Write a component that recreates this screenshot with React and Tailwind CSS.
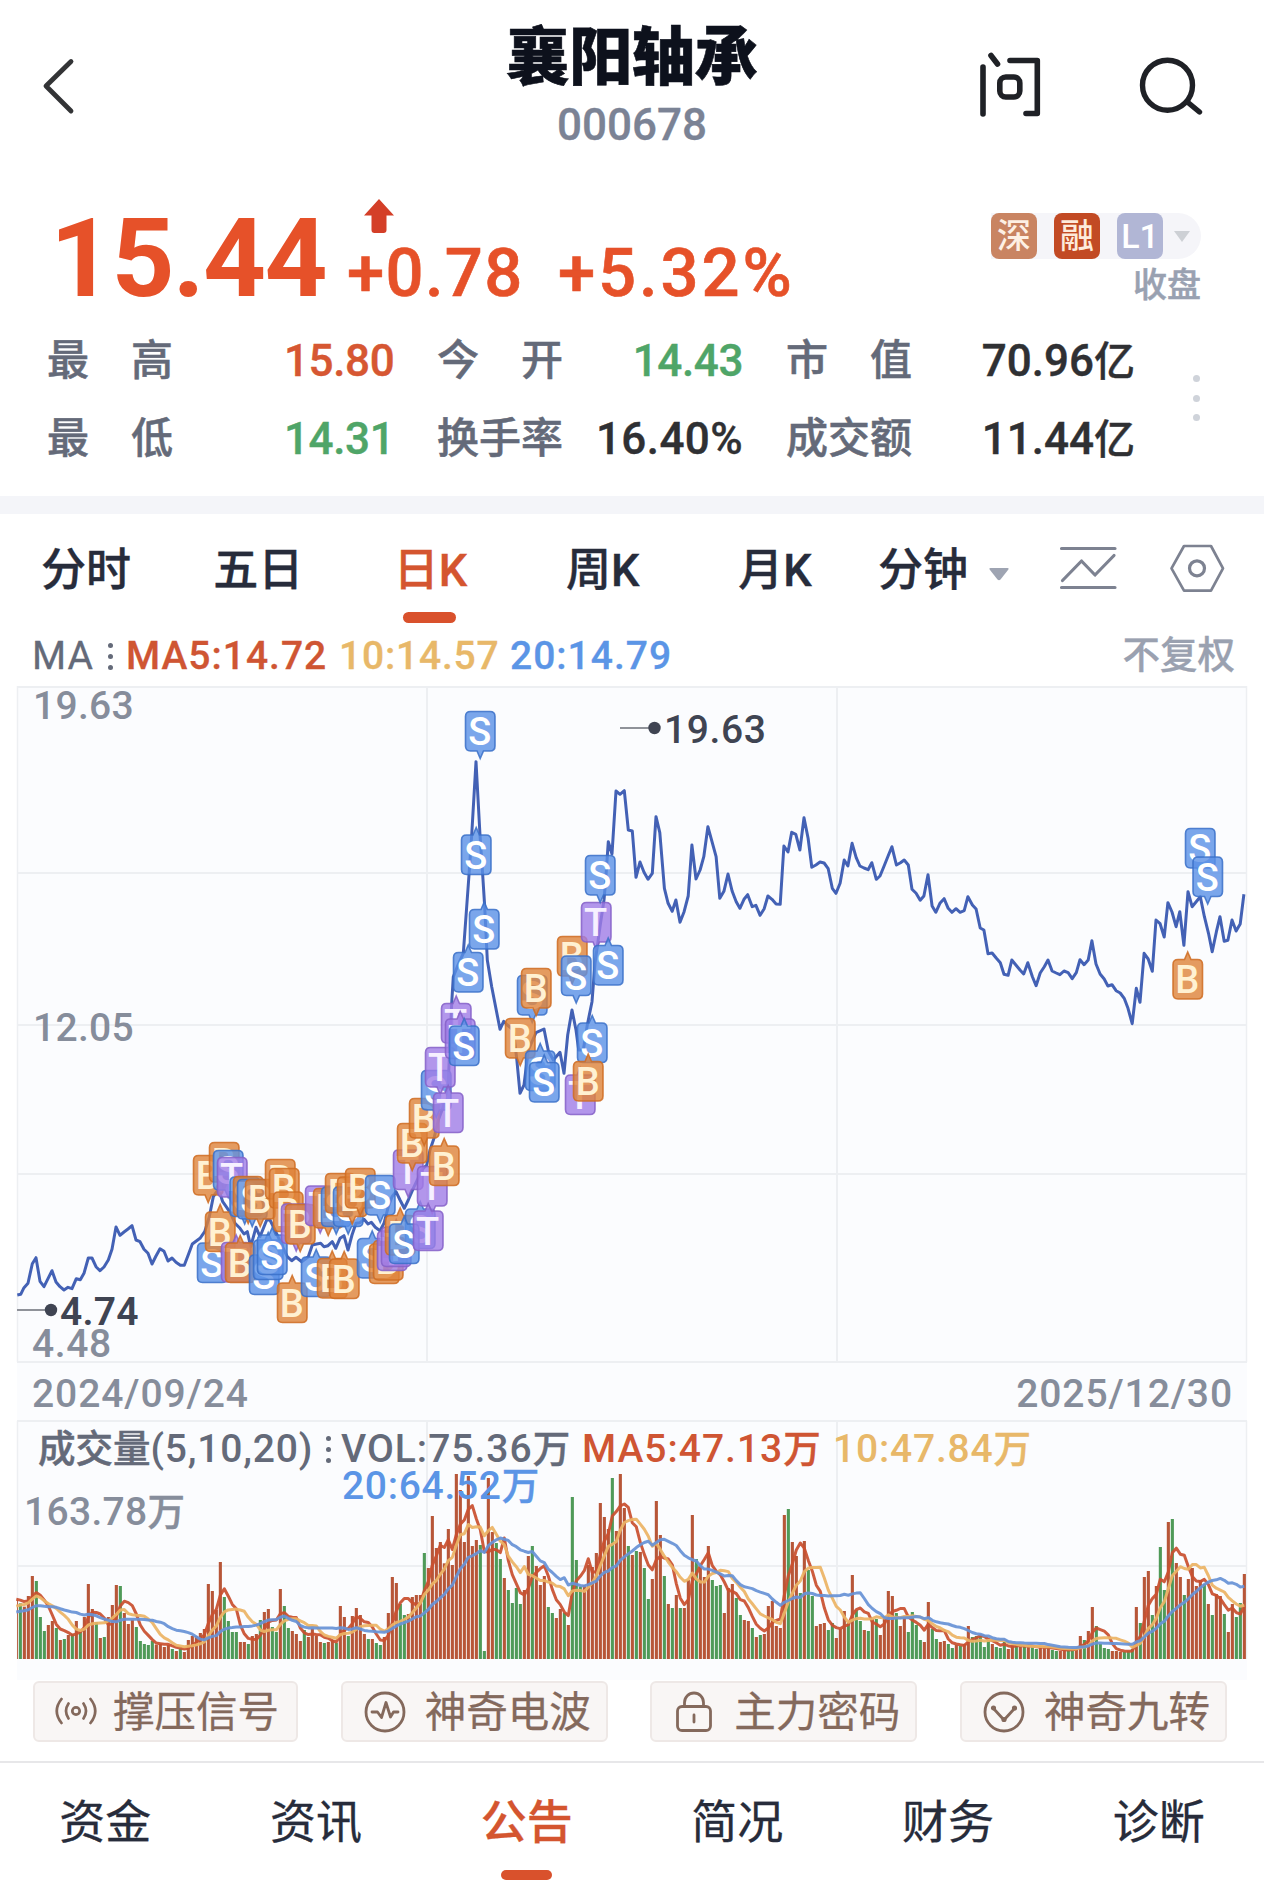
import React from "react";

const RED = "#b75638";
const GREEN = "#4f9a58";

/* ---------- price line, digitised in blocks with their own origin and scale ---------- */
const PRICE_BLOCKS = [
  {
    ox: 0, oy: 1120, sx: 3, sy: 3,
    pts: "52,525 62,523 72,503 84,490 97,431 108,413 120,484 132,500 144,476 156,452 168,486 180,500 192,510 204,502 216,506 229,476 241,479 252,460 265,414 276,414 288,440 300,452 312,441 325,420 336,388 348,321 360,346 372,336 384,327 396,317 408,360 420,365 432,388 444,400 456,432 468,408 480,386 492,394 504,423 516,414 528,427 541,436 553,436 565,404 577,372 589,363 600,355 614,335 628,290 640,230 650,215 660,220 668,245 680,262 692,280 705,310 720,325 732,342 742,335 752,380 768,322 780,350 800,300 810,300 825,330 850,385 862,410 875,422 888,412 905,425",
  },
  {
    ox: 300, oy: 1080, sx: 3, sy: 3,
    pts: "25,530 37,495 50,492 62,490 72,500 84,497 97,485 107,505 120,475 132,467 144,510 156,465 168,430 180,428 192,418 204,432 214,427 226,442 240,452 252,430 265,380 276,350 288,335 300,360 313,385 325,360 340,325 352,300 365,270 380,255 390,210 402,175 415,120 430,80 445,10",
  },
  {
    ox: 400, oy: 680, sx: 3, sy: 3,
    pts: "150,1080 152,1040 155,970 160,890 172,860 190,820 207,585 215,465 228,245 240,465 248,585 254,680 258,760 262,840 275,920 300,1048 311,1024 322,1035 340,1050 350,1135 360,1240 372,1215 385,1110 408,1058 432,1047 445,1112 460,1140 480,1117 492,1180 503,1065 516,990 528,1050 536,1110 550,1110 562,1035 576,965 585,850 600,740 612,660 617,600 625,485 636,522 648,333 660,343 673,332 685,450 697,453 708,592 720,546 732,577 744,598 757,580 768,410",
  },
  {
    ox: 620, oy: 760, sx: 2.4348, sy: 3,
    pts: "97,218 108,385 117,430 127,454 136,420 146,487 156,455 166,408 175,255 185,357 195,330 204,290 214,200 224,245 234,290 243,415 253,394 263,342 273,393 283,425 292,445 302,418 311,404 322,440 331,436 341,466 351,446 360,408 370,418 380,432 390,433 399,258 409,276 418,217 428,223 438,270 448,173 458,235 467,322 477,315 487,306 497,309 507,326 517,385 526,400 536,370 546,300 555,318 565,250 575,293 584,318 594,324 604,329 613,308 624,358 633,348 643,318 653,287 662,260 673,315 683,308 692,300 702,315 711,388 721,400 731,421 740,408 750,344 760,438 769,457 779,430 789,416 799,445 808,457 818,446 828,457 838,452 847,410 858,435 867,447 877,504 886,510 896,581 906,579 916,594 926,608 935,643 945,646 954,600 964,615 974,630 983,642 993,608 1004,650 1013,677 1023,639 1033,620 1042,600 1052,633 1062,639 1071,644 1081,633 1091,638 1101,656 1111,638 1120,599 1130,614 1140,600 1149,542 1159,612 1169,642 1179,657 1188,678 1198,674 1208,692 1218,699 1228,716 1237,745 1247,791 1257,685 1266,727 1276,580 1286,597 1296,634 1305,480 1315,491 1325,531 1334,428 1344,456 1354,500 1363,455 1373,556 1383,395 1393,440 1403,425 1413,410 1423,470 1433,520 1442,575 1452,515 1461,470 1471,544 1480,541 1490,480 1500,513 1510,492 1519,403",
  },
];

const pricePoints = PRICE_BLOCKS.flatMap(({ ox, oy, sx, sy, pts }) =>
  pts.split(" ").map((p) => {
    const [x, y] = p.split(",").map(Number);
    return `${(ox + x / sx).toFixed(1)},${(oy + y / sy).toFixed(1)}`;
  })
).join(" ");

/* ---------- trade markers: letter, left, top, pointer (d = down, u = up) ---------- */
const MARKERS = [
  ["B", 193.5, 1155.5, "d"], ["B", 209.5, 1142.5, "d"], ["S", 213.5, 1150.5, "d"], ["T", 217.5, 1157.5, "d"],
  ["S", 197.5, 1243, "u"], ["B", 205.5, 1212, "u"], ["T", 221.5, 1242.5, "u"], ["B", 225.5, 1243, "u"],
  ["S", 230, 1177, "d"], ["B", 233.5, 1176.5, "d"], ["S", 237.5, 1179.5, "d"], ["B", 245.5, 1179.5, "d"],
  ["B", 265.5, 1159.5, "d"], ["B", 269.5, 1168.5, "d"], ["B", 273.5, 1192, "d"],
  ["S", 249.5, 1255, "u"], ["S", 253.5, 1240, "u"], ["S", 257.5, 1235, "u"],
  ["T", 281.5, 1204, "d"], ["B", 285.5, 1204.5, "d"], ["B", 277.5, 1283, "u"],
  ["T", 305.5, 1186, "d"], ["B", 313.5, 1188.5, "d"], ["S", 321.5, 1187, "d"], ["B", 325.5, 1173.5, "d"],
  ["S", 333.5, 1187, "d"], ["B", 337.5, 1177, "d"], ["B", 345.5, 1168.5, "d"], ["S", 365.5, 1175.5, "d"],
  ["S", 301.5, 1257, "u"], ["B", 317.5, 1258.5, "u"], ["B", 329.5, 1259, "u"],
  ["S", 357.5, 1238.5, "u"], ["B", 369.5, 1244, "u"], ["B", 373.5, 1240.5, "u"], ["T", 377.5, 1231, "u"],
  ["T", 381.5, 1227, "u"], ["B", 385.5, 1215.5, "u"], ["S", 405.5, 1209, "u"], ["S", 389.5, 1224, "u"],
  ["T", 393.5, 1150, "d"], ["T", 417.5, 1166.5, "d"], ["T", 413.5, 1211, "u"],
  ["B", 397.5, 1123.5, "d"], ["B", 409.5, 1098.5, "d"], ["B", 429.5, 1146, "u"],
  ["S", 421.5, 1070.5, "d"], ["T", 425.5, 1047.5, "d"], ["T", 433.5, 1093, "u"],
  ["T", 441.5, 1003.5, "u"], ["T", 445.5, 1019, "u"], ["S", 449.5, 1026, "u"],
  ["S", 453.5, 952.5, "u"], ["S", 469.5, 909.5, "u"], ["S", 461.5, 835, "u"], ["S", 465.5, 711.5, "d"],
  ["S", 517.5, 975.5, "d"], ["B", 521.5, 968.5, "d"], ["B", 505.5, 1018.5, "d"],
  ["S", 525.5, 1051, "u"], ["S", 529.5, 1062.5, "u"], ["B", 557.5, 936.5, "d"], ["S", 561.5, 956, "d"],
  ["T", 581.5, 902.5, "d"], ["S", 585.5, 855.5, "d"], ["S", 593.5, 945.5, "u"], ["S", 577.5, 1023, "u"],
  ["T", 565.5, 1075, "u"], ["B", 573.5, 1061.5, "u"],
  ["S", 1185.5, 828.5, "d"], ["S", 1193, 857, "d"], ["B", 1173, 959.5, "u"],
];

const MARKER_STYLE = {
  S: { fill: "#5a90e6", stroke: "#3a70c8", ink: "#ffffff" },
  B: { fill: "#de8238", stroke: "#cf6c22", ink: "#fff1d2" },
  T: { fill: "#a07ce6", stroke: "#8560c8", ink: "#f6f0ff" },
};

function Marker({ kind, x, y, dir }) {
  const s = MARKER_STYLE[kind];
  const d =
    dir === "d"
      ? "M5 0H24.5Q29.5 0 29.5 5V34.5Q29.5 39.5 24.5 39.5H18L14.7 47L11.5 39.5H5Q0 39.5 0 34.5V5Q0 0 5 0Z"
      : "M5 0H11.5L14.7 -7.5L18 0H24.5Q29.5 0 29.5 5V34.5Q29.5 39.5 24.5 39.5H5Q0 39.5 0 34.5V5Q0 0 5 0Z";
  return (
    <g transform={`translate(${x} ${y})`}>
      <path d={d} fill={s.fill} fillOpacity="0.8" stroke={s.stroke} strokeOpacity="0.85" strokeWidth="1.6" />
      <text x="14.7" y="33.6" textAnchor="middle" fontSize="38" fontFamily="Roboto, sans-serif" fill={s.ink}>
        {kind}
      </text>
    </g>
  );
}

/* ---------- volume bars: colour letter + bar top, measured against a base ---------- */
const parseBars = (text, base) =>
  text.split(" ").map((t) => ({ up: t[0] === "r", h: (base - Number(t.slice(1))) / 3 }));

const BARS = [
  ...parseBars(
    "r720 g730 r740 r708 r648 g663 g771 g813 r795 r783 g804 r840 g837 r825 g822 r783 g812 r771 r672 r747 g786 r834 g831 r771 r735 r675 g678 r759 r792 r780 g801 g843 g852 g855 g843 r854 r852 r861 r855 g867 r873 g866 r876 r840 r828 r828 r819 r807 r672 r693 r750 r606 g711 g783 g816 g816 r846 r846 g852 r828 r822 g780 r756 r747 g801 g816 r687 g738 g804 r813 r822 r843 g810 r831 r805 r828 r846 g849 r846 r840 g849 r738 r771 g828 r768 r744 r765 r822 g837 r837 g849 g855 r831 r759 r651 r669 g732 g765 r762",
    897
  ),
  ...parseBars(
    "r591 r585 r585 g459 r504 r348 r444 r426 r490 r387 r495 r222 r270 r426 r228 r438 r420 g435 g753 r234 r396 g429 g477 r534 g570 g609 g564 g612 r570 r468 g438 r498 r555 r528 g621 g639 r654 r627 g639 r675 g291 g480 g560 r555 r495 r501 r459 r309 r351 r387 g234 r393 r222 r324 g438 r465 g453 r456 g504 g597 r537 r303 r405 g528 r612 g624 r585 g624 r624 r540 r345 g477 r500 r531 r438 g540 g558 g555 r639 r564 r552 g594 g645 r660 r663 g684 r711 g705 r702 r618 r603 r678 r684 r345 g327 r426 r468 g579 r423 g510 g588 r678 r672 r669 g690",
    777
  ),
  ...parseBars(
    "g669 r714 r687 r633 g669 r525 g630 g663 r690 g693 r657 g657 r705 r650 r573 r588 g639 r678 r651 g696 g636 g675 g720 r726 r606 g687 g717 r726 r723 g732 g744 r735 g738 r732 r678 g711 g708 g708 g741 g720 r732 g741 g744 g726 r747 r738 g735 r735 g740 r738 g742 g747 r740 r742 r742 g750 g753 r753 r747 g747 g745 r747 r708 g720 r693 r621 g678 g732 g744 g747 r753 r753 r756 g755 g753 g747 r621 g669 r531 r513 g645 r558 g441 g570 r366 g357 r489 r531 g585 r537 r504 r558 r540 g552 r612 g645 r582 r588 g642 r696 r612 g651 g609 r522",
    777
  ),
];

/* trading days before the visible window, used to seed the averages */
const HISTORY = [...Array(10).fill(41), ...Array(5).fill(46), ...Array(4).fill(60)];
const BASELINE = 1659;

function average(n) {
  const all = [...HISTORY, ...BARS.map((b) => b.h)];
  return BARS.map((_, i) => {
    const end = i + HISTORY.length;
    let sum = 0;
    for (let k = 0; k < n; k++) sum += all[end - k];
    return `${(16.3 + i * 4).toFixed(1)},${(BASELINE - sum / n).toFixed(1)}`;
  }).join(" ");
}

function ChartCanvas() {
  return (
    <svg className="block" width="1264" height="994" viewBox="0 686 1264 994" fill="none">
      <rect x="17" y="686" width="1230" height="994" fill="#fbfcfe" />
      <g stroke="#edeff2" strokeWidth="2">
        <path d="M17 687H1247M17 873H1247M17 1025H1247M17 1174H1247M17 1362H1247M17 1421H1247M17 1566H1247" />
        <path d="M427 686V1362M837 686V1362M427 1421V1659M837 1421V1659" />
        <path d="M17.5 686V1362M1246.5 686V1362M17.5 1421V1659M1246.5 1421V1659" strokeWidth="1.5" />
      </g>

      <polyline points={pricePoints} stroke="#4361b5" strokeWidth="3" strokeLinejoin="round" />
      {MARKERS.map(([k, x, y, dir], i) => (
        <Marker key={i} kind={k} x={x} y={y} dir={dir} />
      ))}

      <path d="M620 728H650M17 1310H46" stroke="#8f9299" strokeWidth="1.8" />
      <circle cx="654.5" cy="728" r="6.2" fill="#3f4452" />
      <circle cx="51" cy="1310" r="6.2" fill="#3f4452" />

      {BARS.map((b, i) => {
        const left = Math.max(17, 14.8 + i * 4);
        return (
          <rect
            key={i}
            x={left}
            y={BASELINE - b.h}
            width={17.9 + i * 4 - left}
            height={b.h}
            fill={b.up ? RED : GREEN}
          />
        );
      })}
      <g strokeWidth="3" strokeLinejoin="round" strokeOpacity="0.93">
        <polyline points={average(5)} stroke="#c9502f" />
        <polyline points={average(10)} stroke="#ecb465" />
        <polyline points={average(20)} stroke="#6792d6" />
      </g>
    </svg>
  );
}

function Dots({ className }) {
  return (
    <span className={"flex h-[27px] flex-col justify-between " + className}>
      <i className="size-[5px] rounded-full bg-[#646a79]" />
      <i className="size-[5px] rounded-full bg-[#646a79]" />
      <i className="size-[5px] rounded-full bg-[#646a79]" />
    </span>
  );
}

function Spread({ text }) {
  return (
    <span className="flex w-[126px] justify-between font-medium text-[#646a79] [-webkit-text-stroke:0.5px]">
      {text.split("").map((c) => (
        <span key={c}>{c}</span>
      ))}
    </span>
  );
}

function Wan() {
  return <span className="text-[37.5px] [-webkit-text-stroke:0.4px]">万</span>;
}

function Header() {
  return (
    <header className="grid h-[160px] grid-cols-[1fr_auto_1fr]">
      <svg className="mt-[56px] ml-[40px]" width="38" height="60" viewBox="40 56 38 60" fill="none">
        <path d="M71 61.5L46 86L71 111" stroke="#333436" strokeWidth="4.8" strokeLinecap="round" strokeLinejoin="round" />
      </svg>
      <div className="flex flex-col items-center pt-[26px]">
        <h1 className="text-[63px] leading-none font-black tracking-[-0.3px] text-[#0d111c] [-webkit-text-stroke:0.6px]">襄阳轴承</h1>
        <div className="mt-[14px] text-[44px] leading-none font-medium text-[#7b8395] [-webkit-text-stroke:0.3px]">000678</div>
      </div>
      <div className="flex justify-end gap-[94px] pt-[50px] pr-[60px]">
        <svg width="66" height="70" viewBox="978 50 66 70" fill="none" stroke="#1f2126" strokeWidth="5.6" strokeLinecap="round" strokeLinejoin="round">
          <path d="M983 67V114M991 55.5L997.5 64M1010 60.5H1037.3V113.5H1026" />
          <rect x="999.8" y="77" width="20" height="20" rx="6" />
        </svg>
        <svg width="66" height="70" viewBox="1138 50 66 70" fill="none" stroke="#1f2126" strokeWidth="5.4" strokeLinecap="round">
          <circle cx="1167.5" cy="85.2" r="25" />
          <path d="M1188 102.5L1199.5 112" />
        </svg>
      </div>
    </header>
  );
}

function Quote() {
  return (
    <section className="flex h-[161px] justify-between pr-[63px] pl-[50px] text-[#e65129]">
      <div className="flex">
        <div className="w-[277px] pt-[44px] text-[110px] leading-none font-bold tracking-[-1.7px]">15.44</div>
        <div className="ml-[18px] pt-[38px]">
          <svg className="ml-[17px] block" width="34" height="36" viewBox="362 198 34 36">
            <path d="M379 199L394 215.5H386.5V230Q386.5 233 383.5 233H374.5Q371.5 233 371.5 230V215.5H364Z" fill="#d43f28" />
          </svg>
          <div className="mt-[6px] ml-[2px] flex text-[67px] leading-none font-medium tracking-[1.3px] [-webkit-text-stroke:0.6px]">
            <span className="w-[211px]">+0.78</span>
            <span className="tracking-[2.9px]">+5.32%</span>
          </div>
        </div>
      </div>
      <div className="flex flex-col items-end pt-[53px]">
        <div className="flex h-[46px] items-center gap-[17px] rounded-l-lg rounded-r-full bg-[#f5f5f9] text-[34px] leading-none text-white">
          <span className="flex h-[46px] w-[46px] items-center justify-center rounded-lg bg-[#c98462] font-medium text-[#fdf0e4]">深</span>
          <span className="flex h-[46px] w-[46px] items-center justify-center rounded-lg bg-[#c24a24] font-medium text-[#fdeadb]">融</span>
          <span className="flex h-[46px] w-[46px] items-center justify-center rounded-lg bg-[#b1b6d5] font-medium">L1</span>
          <svg className="mr-[10px] -ml-[7px]" width="18" height="11" viewBox="0 0 18 11">
            <path d="M1 0H17L9 11Z" fill="#cdd0d5" />
          </svg>
        </div>
        <div className="mt-[9px] text-[34px] leading-none font-medium text-[#99a1b1] [-webkit-text-stroke:0.5px]">收盘</div>
      </div>
    </section>
  );
}

function Stats() {
  return (
    <section className="flex h-[175px]">
      <div className="grid w-[1135px] grid-cols-[237px_153px_130px_176px_173px_219px] grid-rows-[78px_78px] items-center pt-px pl-[47px] text-[42px] leading-none">
        <Spread text="最高" />
        <b className="text-[44px] font-medium tracking-[-0.4px] text-[#d65732] [-webkit-text-stroke:0.4px]">15.80</b>
        <Spread text="今开" />
        <b className="text-right text-[44px] font-medium tracking-[-0.4px] text-[#4fa568] [-webkit-text-stroke:0.4px]">14.43</b>
        <div className="pl-[43px]"><Spread text="市值" /></div>
        <b className="text-right text-[44px] font-medium text-[#2f3033] [-webkit-text-stroke:0.4px]">70.96<span className="text-[41px]">亿</span></b>
        <Spread text="最低" />
        <b className="text-[44px] font-medium tracking-[-0.4px] text-[#4fa568] [-webkit-text-stroke:0.4px]">14.31</b>
        <Spread text="换手率" />
        <b className="text-right text-[44px] font-medium tracking-[0.4px] text-[#2f3033] [-webkit-text-stroke:0.4px]">16.40%</b>
        <div className="pl-[43px]"><Spread text="成交额" /></div>
        <b className="text-right text-[44px] font-medium text-[#2f3033] [-webkit-text-stroke:0.4px]">11.44<span className="text-[41px]">亿</span></b>
      </div>
      <div className="mt-[54px] ml-[58px] flex h-[46px] flex-col justify-between">
        <i className="size-[7px] rounded-full bg-[#cfd3da]" />
        <i className="size-[7px] rounded-full bg-[#cfd3da]" />
        <i className="size-[7px] rounded-full bg-[#cfd3da]" />
      </div>
    </section>
  );
}

function PeriodTabs() {
  return (
    <nav className="flex h-[112px] text-[45px] leading-none font-medium text-[#272c3b] [-webkit-text-stroke:0.4px]">
      <div className="grid w-[861px] grid-cols-5">
        {["分时", "五日", "日K", "周K", "月K"].map((t) => (
          <div key={t} className={"flex flex-col items-center pt-[34px] " + (t === "日K" ? "text-[#d4552f]" : "")}>
            <span>{t}</span>
            {t === "日K" && <i className="mt-[19px] mr-[2px] h-[11px] w-[53px] rounded-full bg-[#d9512c]" />}
          </div>
        ))}
      </div>
      <span className="ml-[17px] pt-[34px]">分钟</span>
      <svg className="mt-[54px] ml-[21px]" width="20" height="13" viewBox="0 0 20 13">
        <path d="M1.5 0H18.5Q20.500 0 19 2L11.500 11.500Q10 13 8.500 11.500L1 2Q-0.500 0 1.500 0Z" fill="#9ea4b2" />
      </svg>
      <svg className="mt-[30px] ml-[50px]" width="58" height="48" viewBox="1059 544 58 48" fill="none" stroke="#7d8291" strokeWidth="3.2" strokeLinecap="round" strokeLinejoin="round">
        <path d="M1061.500 548.500H1115M1061.500 587.500H1115M1062.500 580.500L1081.500 561L1095 575L1114 555.500" />
      </svg>
      <svg className="mt-[29px] ml-[52px]" width="56" height="50" viewBox="1169 543 56 50" fill="none" stroke="#7d8291" strokeWidth="2.7" strokeLinejoin="round">
        <path d="M1171.500 568.300L1184 546H1211L1223 568.300L1211 590.700H1184Z" />
        <circle cx="1197" cy="568.300" r="7.500" strokeWidth="3.2" />
      </svg>
    </nav>
  );
}

function AverageLegend() {
  return (
    <div className="flex h-[60px] items-center pr-[29px] pl-[32px] text-[39px] leading-none font-medium tracking-[1px] [-webkit-text-stroke:0.3px]">
      <span className="w-[76px] font-normal text-[#646a79]">MA</span>
      <Dots className="w-[18px]" />
      <span className="w-[213px] text-[#cf5533]">MA5:14.72</span>
      <span className="w-[171px] tracking-[0.8px] text-[#e8b869]">10:14.57</span>
      <span className="text-[#5b95e6]">20:14.79</span>
      <span className="ml-auto text-[37.5px] tracking-normal text-[#9aa1b0]">不复权</span>
    </div>
  );
}

function Charts() {
  return (
    <section className="relative text-[39px] leading-none font-medium tracking-[1px] text-[#868d9b]">
      <ChartCanvas />
      <span className="absolute top-px left-[33px] tracking-[0.3px]">19.63</span>
      <span className="absolute top-[323px] left-[33px] tracking-[0.3px]">12.05</span>
      <span className="absolute top-[639px] left-[32px] tracking-[0.6px]">4.48</span>
      <span className="absolute top-[607px] left-[60px] font-semibold tracking-[0.2px] text-[#3f4452]">4.74</span>
      <span className="absolute top-[25px] left-[664px] tracking-[0.6px] text-[#3f4452]">19.63</span>
      <div className="absolute top-[689px] right-[31px] left-[32px] flex justify-between tracking-[0.9px]">
        <span>2024/09/24</span>
        <span>2025/12/30</span>
      </div>
      <div className="absolute top-[744px] left-[38px] flex items-center text-[#646a79]">
        <span className="w-[288px] tracking-[0.8px]"><span className="text-[37.5px] tracking-normal [-webkit-text-stroke:0.5px]">成交量</span>(5,10,20)</span>
        <Dots className="w-[15px]" />
        <span className="w-[241px]">VOL:75.36<Wan /></span>
        <span className="w-[251px] text-[#cf5533]">MA5:47.13<Wan /></span>
        <span className="tracking-[0.8px] text-[#e8b869]">10:47.84<Wan /></span>
      </div>
      <span className="absolute top-[781px] left-[342px] tracking-[0.7px] text-[#5b95e6]">20:64.52<Wan /></span>
      <span className="absolute top-[807px] left-[24px] tracking-[0.3px]">163.78<Wan /></span>
    </section>
  );
}

function SignalIcon() {
  return (
    <svg width="42" height="42" viewBox="0 0 42 42" fill="none" stroke="#84695c" strokeWidth="2.7" strokeLinecap="round">
      <circle cx="21" cy="20" r="3.700" />
      <path d="M13.500 12.500Q8.500 20 13.500 27.500M28.500 12.500Q33.500 20 28.500 27.500M6.500 8Q-3 20 6.500 32M35.500 8Q45 20 35.500 32" />
    </svg>
  );
}
function WaveIcon() {
  return (
    <svg width="42" height="42" viewBox="0 0 42 42" fill="none" stroke="#84695c" strokeWidth="2.800" strokeLinecap="round" strokeLinejoin="round">
      <circle cx="21" cy="21" r="19" />
      <path d="M8 21H13.500L17.500 26.500L22 11.500L26.500 26L29.500 21H34" />
    </svg>
  );
}
function LockIcon() {
  return (
    <svg width="42" height="42" viewBox="0 0 42 42" fill="none" stroke="#84695c" strokeWidth="2.800" strokeLinecap="round" strokeLinejoin="round">
      <rect x="4.500" y="15.500" width="33" height="24" rx="4.500" />
      <path d="M11.500 15V11.500A9.500 9.500 0 0 1 30.500 11.500V15M21 24V31" />
    </svg>
  );
}
function NineIcon() {
  return (
    <svg width="42" height="42" viewBox="0 0 42 42" fill="none" stroke="#84695c" strokeWidth="2.800" strokeLinecap="round" strokeLinejoin="round">
      <circle cx="21" cy="21" r="19" />
      <path d="M10.500 17.500L21 29L31.500 17.500" />
      <circle cx="10.500" cy="17" r="1.2" fill="#84695c" />
      <circle cx="31.500" cy="17" r="1.2" fill="#84695c" />
      <circle cx="21" cy="28.500" r="1.2" fill="#84695c" />
    </svg>
  );
}

function SignalButtons() {
  const items = [
    ["撑压信号", SignalIcon],
    ["神奇电波", WaveIcon],
    ["主力密码", LockIcon],
    ["神奇九转", NineIcon],
  ];
  return (
    <div className="flex h-[81px] justify-between pt-px pr-[37px] pl-[33px]">
      {items.map(([label, Icon], i) => (
        <button
          key={label}
          className={
            "flex h-[61px] items-center rounded-md border-2 border-[#eee8e6] bg-[#f9f6f5] text-[41.5px] leading-none text-[#84695c] [-webkit-text-stroke:0.3px] " +
            (i === 0 ? "w-[265px] gap-[16px] pl-[20px]" : "w-[267px] gap-[19px] pl-[21px]")
          }
        >
          <Icon />
          <span className="pt-[3px]">{label}</span>
        </button>
      ))}
    </div>
  );
}

function BottomTabs() {
  return (
    <nav className="grid h-[120px] grid-cols-6 overflow-hidden border-t-2 border-[#e7e7e9] text-[46px] leading-none text-[#272c3b] [-webkit-text-stroke:0.3px]">
      {["资金", "资讯", "公告", "简况", "财务", "诊断"].map((t) => (
        <div key={t} className={"flex flex-col items-center pt-[36px] " + (t === "公告" ? "font-medium text-[#d4552f]" : "")}>
          <span>{t}</span>
          {t === "公告" && <i className="mt-[25px] h-[10px] w-[51px] rounded-full bg-[#d9512c]" />}
        </div>
      ))}
    </nav>
  );
}

export default function App() {
  return (
    <main className="h-[1881px] w-[1264px] overflow-hidden bg-white font-['Roboto','Noto_Sans_CJK_SC',sans-serif]" lang="zh-CN">
      <Header />
      <Quote />
      <Stats />
      <div className="h-[18px] bg-[#f4f5f9]" />
      <PeriodTabs />
      <AverageLegend />
      <Charts />
      <SignalButtons />
      <BottomTabs />
    </main>
  );
}
